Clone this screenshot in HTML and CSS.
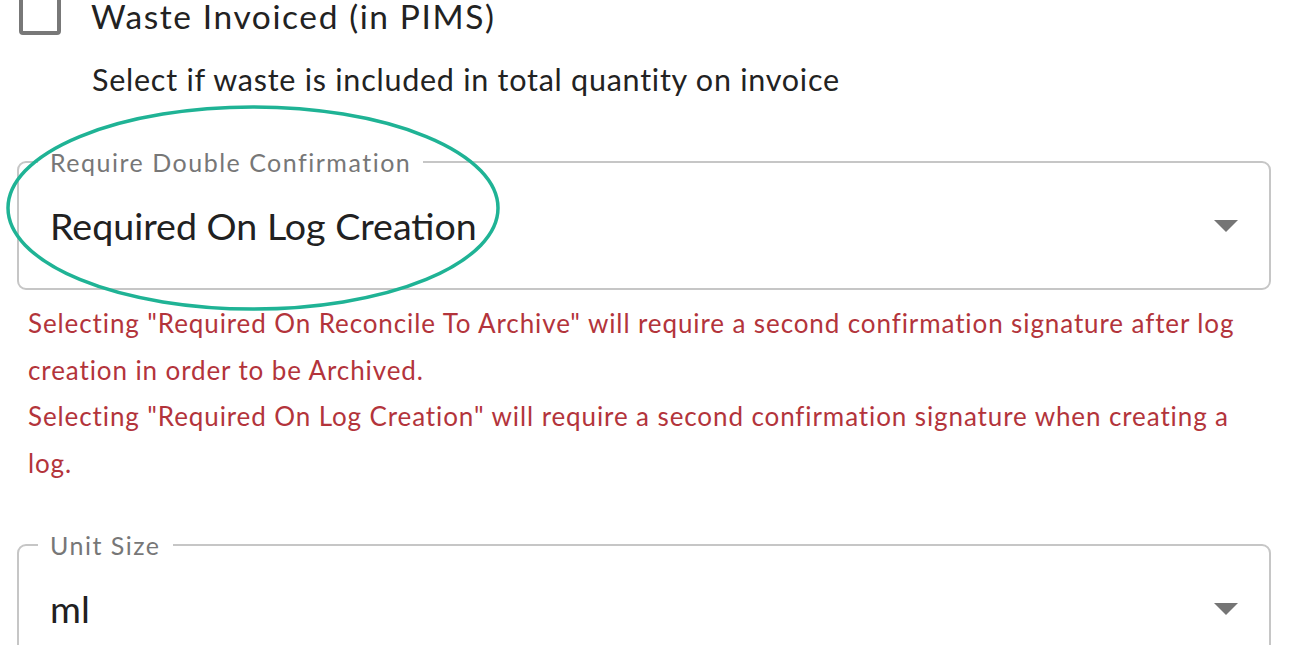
FILE: index.html
```html
<!DOCTYPE html>
<html lang="en">
<head>
<meta charset="utf-8">
<title>Form</title>
<link rel="stylesheet" href="styles.css">
</head>
<body>
<div class="form">
  <div class="check-row">
    <span class="checkbox"></span>
    <span class="check-label">Waste Invoiced (in PIMS)</span>
  </div>
  <div class="helper">Select if waste is included in total quantity on invoice</div>

  <fieldset class="field first">
    <legend>Require Double Confirmation</legend>
    <div class="field-row">
      <span class="value">Required On Log Creation</span>
      <svg class="arrow" width="24" height="12" viewBox="0 0 24 12"><path d="M0 0H24L12 12Z" fill="#757575"/></svg>
    </div>
  </fieldset>
  <div class="error">
    <p>Selecting "Required On Reconcile To Archive" will require a second confirmation signature after log creation in order to be Archived.</p>
    <p>Selecting "Required On Log Creation" will require a second confirmation signature when creating a log.</p>
  </div>

  <fieldset class="field second">
    <legend>Unit Size</legend>
    <div class="field-row">
      <span class="value">ml</span>
      <svg class="arrow" width="24" height="12" viewBox="0 0 24 12"><path d="M0 0H24L12 12Z" fill="#757575"/></svg>
    </div>
  </fieldset>

  <svg class="annotation" width="500" height="210" viewBox="0 0 500 210">
    <ellipse cx="250" cy="105" rx="245" ry="101" fill="none" stroke="#1fb395" stroke-width="3.5"/>
  </svg>
</div>
</body>
</html>
```
FILE: styles.css
```css
html, body {
  margin: 0;
  padding: 0;
  background: #ffffff;
  overflow: hidden;
}
body {
  font-family: Lato, "Open Sans", sans-serif;
  color: #212121;
  width: 1291px;
  height: 645px;
}
.form {
  position: relative;
  padding: 0 20px 0 17px;
  width: 1254px;
}
.check-row {
  display: flex;
  align-items: center;
  margin-top: -7px;
  height: 42px;
}
.checkbox {
  box-sizing: border-box;
  width: 42px;
  height: 42px;
  margin-left: 2px;
  border: 4px solid #787878;
  border-radius: 4px;
  flex: none;
}
.check-label {
  margin-left: 30px;
  margin-top: 4px;
  font-size: 33.5px;
  line-height: 34px;
  letter-spacing: 1.6px;
  color: #222;
}
.helper {
  margin-top: 26px;
  padding-left: 75px;
  font-size: 30.5px;
  line-height: 36px;
  letter-spacing: 0.75px;
  color: #222;
}
.field {
  margin: 0;
  padding: 0 31px 13px 31px;
  border: 2px solid #c6c6c6;
  border-radius: 9px;
  min-width: 0;
}
.field.first {
  margin-top: 50px;
}
.field.second {
  margin-top: 43px;
}
.field legend {
  margin-left: -12px;
  padding: 0 12px;
  font-size: 25px;
  line-height: 30px;
  letter-spacing: 1.5px;
  color: #777;
}
.field-row {
  display: flex;
  align-items: center;
  justify-content: space-between;
  height: 98px;
}
.value {
  font-size: 37.6px;
  line-height: 46px;
  color: #212121;
}
.arrow {
  display: block;
}
.error {
  margin-top: 10px;
  padding: 0 11px;
  color: #b3343b;
  font-size: 26px;
  line-height: 46.7px;
  letter-spacing: 0.9px;
}
.error p {
  margin: 0;
}
.annotation {
  position: absolute;
  left: 3px;
  top: 110px;
  pointer-events: none;
}
```
